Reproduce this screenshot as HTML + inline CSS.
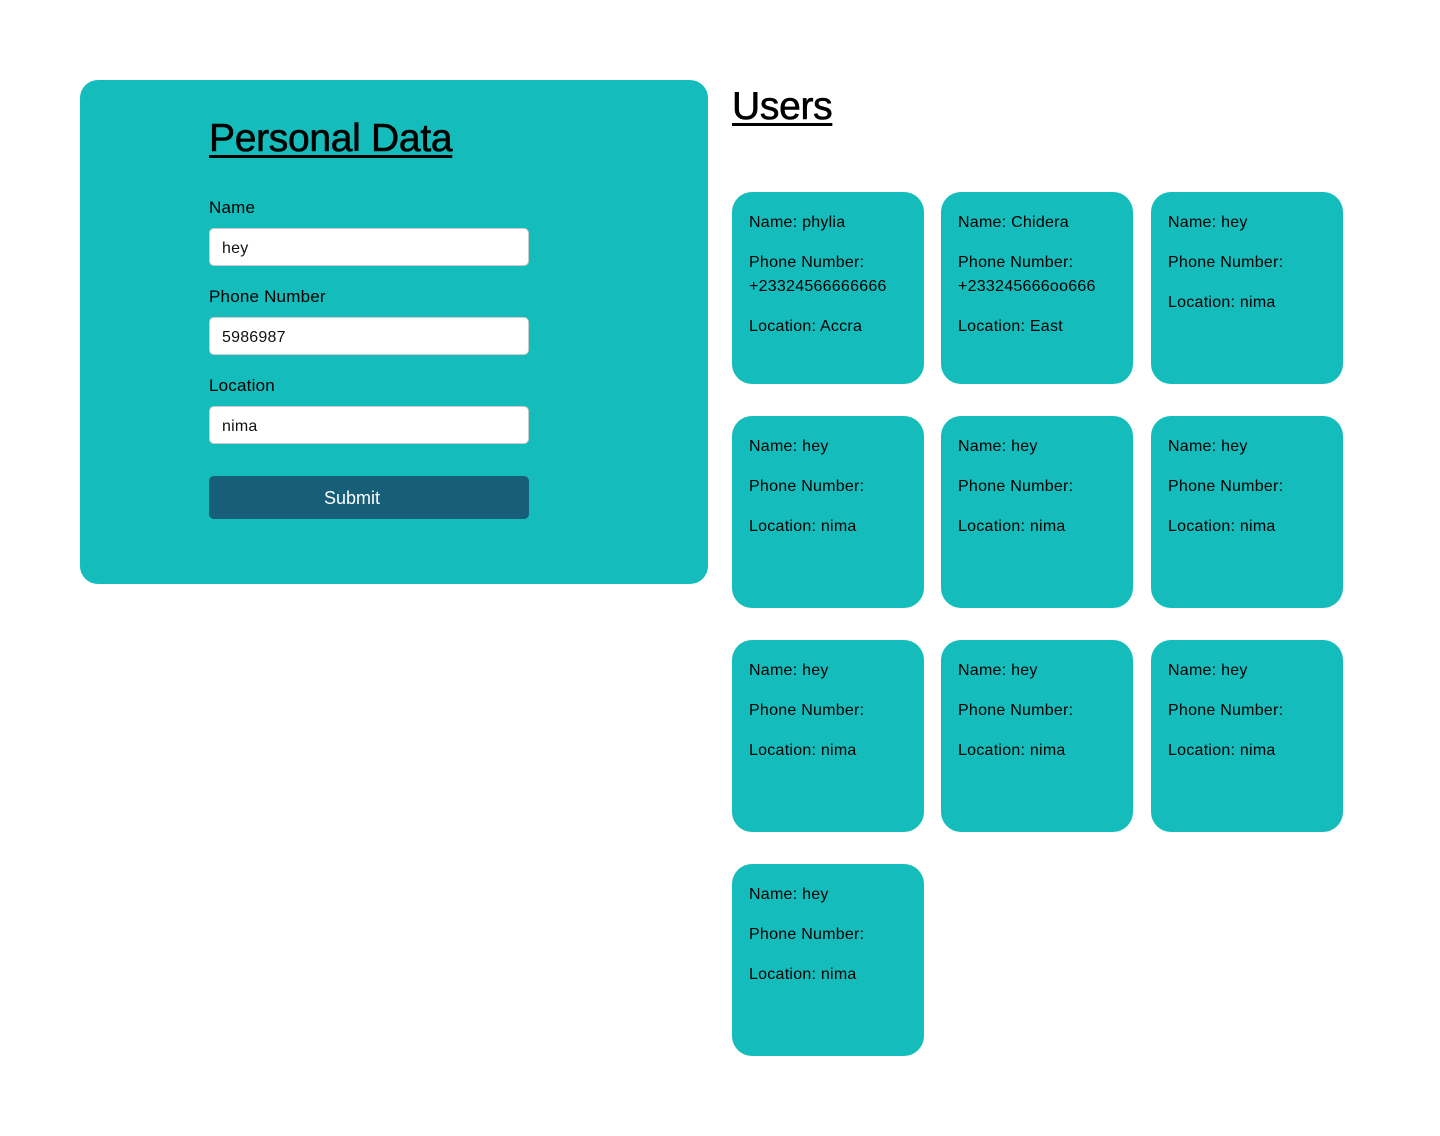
<!DOCTYPE html>
<html><head><meta charset="utf-8"><style>
*{margin:0;padding:0;box-sizing:border-box}
body{width:1440px;height:1136px;background:#fff;font-family:"Liberation Sans",sans-serif;color:#000;position:relative;overflow:hidden}
.panel{position:absolute;left:80px;top:80px;width:628px;height:504px;background:#15bcbc;border-radius:18px}
h1{position:absolute;font-size:39px;font-weight:400;text-decoration:underline;text-decoration-thickness:3px;text-underline-offset:4px;letter-spacing:-0.3px;line-height:46px;-webkit-text-stroke:0.6px #000}
.lbl{position:absolute;left:209px;font-size:17px;line-height:20px;letter-spacing:0.2px}
.inp{position:absolute;left:209px;width:320px;height:38px;background:#fff;border:1px solid #ccc;border-radius:5px;font-size:16px;padding-left:12px;padding-top:2px;line-height:36px;color:#111;letter-spacing:0.2px}
.btn{position:absolute;left:209px;top:476px;width:320px;height:43px;background:#175e78;border-radius:5px;color:#fff;font-size:18px;text-align:center;line-height:43px;padding-right:34px;padding-top:1px}
.card{position:absolute;width:192px;height:192px;background:#15bcbc;border-radius:20px;padding:19px 0 0 17px;font-size:16px;line-height:24px;letter-spacing:0.25px}
.card p{margin-bottom:16px}
</style></head><body>
<div class="panel"></div>
<h1 style="left:209px;top:116px">Personal Data</h1>
<div class="lbl" style="top:198px">Name</div>
<div class="inp" style="top:228px">hey</div>
<div class="lbl" style="top:287px">Phone Number</div>
<div class="inp" style="top:317px">5986987</div>
<div class="lbl" style="top:376px">Location</div>
<div class="inp" style="top:406px">nima</div>
<div class="btn">Submit</div>
<h1 style="left:732px;top:84px">Users</h1>

<div class="card" style="left:732px;top:192px"><p>Name: phylia</p><p>Phone Number: +23324566666666</p><p>Location: Accra</p></div>
<div class="card" style="left:941px;top:192px"><p>Name: Chidera</p><p>Phone Number: +233245666oo666</p><p>Location: East</p></div>
<div class="card" style="left:1151px;top:192px"><p>Name: hey</p><p>Phone Number:</p><p>Location: nima</p></div>

<div class="card" style="left:732px;top:416px"><p>Name: hey</p><p>Phone Number:</p><p>Location: nima</p></div>
<div class="card" style="left:941px;top:416px"><p>Name: hey</p><p>Phone Number:</p><p>Location: nima</p></div>
<div class="card" style="left:1151px;top:416px"><p>Name: hey</p><p>Phone Number:</p><p>Location: nima</p></div>

<div class="card" style="left:732px;top:640px"><p>Name: hey</p><p>Phone Number:</p><p>Location: nima</p></div>
<div class="card" style="left:941px;top:640px"><p>Name: hey</p><p>Phone Number:</p><p>Location: nima</p></div>
<div class="card" style="left:1151px;top:640px"><p>Name: hey</p><p>Phone Number:</p><p>Location: nima</p></div>

<div class="card" style="left:732px;top:864px"><p>Name: hey</p><p>Phone Number:</p><p>Location: nima</p></div>
</body></html>
